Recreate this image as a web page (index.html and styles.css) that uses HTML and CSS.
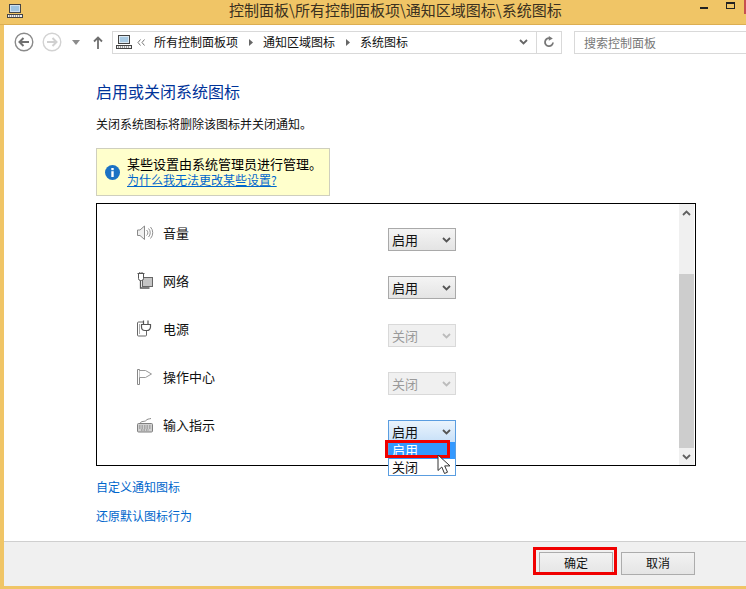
FILE: index.html
```html
<!DOCTYPE html>
<html lang="zh-CN">
<head>
<meta charset="utf-8">
<title>系统图标</title>
<link rel="stylesheet" href="styles.css">
</head>
<body>
<div class="window">
  <header class="titlebar">
    <svg class="win-icon" width="16" height="16" viewBox="0 0 16 16"><rect x="2.5" y="1.5" width="11" height="8" fill="#cfe0ee" stroke="#444"/><rect x="4" y="3" width="8" height="5" fill="#9ec3e0"/><rect x="0.5" y="11.5" width="15" height="3" fill="#eee" stroke="#444"/><path d="M2 13h1M4 13h1M6 13h1M8 13h1M10 13h1M12 13h1" stroke="#444"/></svg>
    <div class="title">控制面板\所有控制面板项\通知区域图标\系统图标</div>
    <div class="controls">
      <span class="min"></span>
      <span class="max"></span>
      <span class="close"></span>
    </div>
  </header>
  <main class="main">
    <nav class="toolbar">
      <svg class="nav-btn" width="20" height="20" viewBox="0 0 20 20"><circle cx="10" cy="10" r="8.8" fill="#fff" stroke="#8a8a8a" stroke-width="1.4"/><path d="M15 10H6M9.5 6L5.5 10l4 4" fill="none" stroke="#707070" stroke-width="2"/></svg>
      <svg class="nav-btn fwd" width="20" height="20" viewBox="0 0 20 20"><circle cx="10" cy="10" r="8.8" fill="#fff" stroke="#d2d2d2" stroke-width="1.4"/><path d="M5 10h9M10.5 6l4 4-4 4" fill="none" stroke="#d0d0d0" stroke-width="2"/></svg>
      <svg class="drop" width="8" height="5" viewBox="0 0 8 5"><path d="M0 0h8L4 5z" fill="#8c8c8c"/></svg>
      <svg class="up" width="10" height="13" viewBox="0 0 10 13"><path d="M5 13V2M1 5.5l4-4 4 4" fill="none" stroke="#6f6f6f" stroke-width="1.8"/></svg>
      <div class="address">
        <svg class="addr-icon" width="16" height="16" viewBox="0 0 16 16"><rect x="2.5" y="1.5" width="11" height="8" fill="#dbe8f2" stroke="#444"/><rect x="4" y="3" width="8" height="5" fill="#a9cbe4"/><rect x="0.5" y="11.5" width="15" height="3" fill="#eee" stroke="#444"/><path d="M2 13h1M4 13h1M6 13h1M8 13h1M10 13h1M12 13h1" stroke="#444"/></svg>
        <svg class="dbl" width="8" height="7" viewBox="0 0 8 7"><path d="M3.5 0.5L1 3.5l2.5 3M7.5 0.5L5 3.5l2.5 3" fill="none" stroke="#777"/></svg>
        <span class="crumb first">所有控制面板项</span>
        <svg class="sep" width="4" height="7" viewBox="0 0 4 7"><path d="M0 0l4 3.5L0 7z" fill="#666"/></svg>
        <span class="crumb">通知区域图标</span>
        <svg class="sep" width="4" height="7" viewBox="0 0 4 7"><path d="M0 0l4 3.5L0 7z" fill="#666"/></svg>
        <span class="crumb">系统图标</span>
        <svg class="addr-chev" width="9" height="6" viewBox="0 0 9 6"><path d="M1 1l3.5 3.5L8 1" fill="none" stroke="#666" stroke-width="1.8"/></svg>
        <div class="refresh">
          <svg width="12" height="12" viewBox="0 0 12 12"><path d="M10 6.5A4 4 0 1 1 6.5 2.2" fill="none" stroke="#777" stroke-width="1.8"/><path d="M5.8 0l4 2.4-4 2.4z" fill="#777"/></svg>
        </div>
      </div>
      <div class="search">搜索控制面板</div>
    </nav>

    <section class="content">
      <h1 class="heading">启用或关闭系统图标</h1>
      <p class="intro">关闭系统图标将删除该图标并关闭通知。</p>
      <div class="notice">
        <svg class="info" width="15" height="15" viewBox="0 0 15 15"><circle cx="7.5" cy="7.5" r="7.5" fill="#1b72c4"/><rect x="6.3" y="3" width="2.4" height="2.2" fill="#fff"/><rect x="6.3" y="6.2" width="2.4" height="5.8" fill="#fff"/></svg>
        <div class="notice-text">
          <div class="notice-main">某些设置由系统管理员进行管理。</div>
          <a class="link notice-link" href="#">为什么我无法更改某些设置?</a>
        </div>
      </div>

      <div class="listbox">
        <div class="rows">
          <div class="row">
            <svg class="row-icon" width="18" height="18" viewBox="0 0 18 18"><path d="M1.500 6h2.500L8.500 2v13.500L4 11.500H1.500z" fill="#f0f0f0" stroke="#8a8a8a"/><path d="M10.500 6a3.500 3.500 0 0 1 0 5.500M12.500 4.500a6 6 0 0 1 0 8.500M14.500 3a8.500 8.500 0 0 1 0 11.500" fill="none" stroke="#909090"/></svg>
            <span class="row-label">音量</span>
            <div class="select"><span>启用</span><svg width="9" height="6" viewBox="0 0 9 6"><path d="M1 1l3.500 3.500L8 1" fill="none" stroke="#555" stroke-width="1.800"/></svg></div>
          </div>
          <div class="row">
            <svg class="row-icon" width="18" height="18" viewBox="0 0 18 18"><rect x="6.500" y="5.500" width="10" height="9" fill="#c4c4c4" stroke="#666"/><path d="M2.500 1.500v5a2 2 0 0 0 2 2h1a2 2 0 0 0 2-2v-5M1.500 1.500h7M3.800 1v-1M6 1v-1" fill="#fff" stroke="#555"/><path d="M4.500 8.500v7.500h9" fill="none" stroke="#555" stroke-width="1.300"/></svg>
            <span class="row-label">网络</span>
            <div class="select"><span>启用</span><svg width="9" height="6" viewBox="0 0 9 6"><path d="M1 1l3.500 3.500L8 1" fill="none" stroke="#555" stroke-width="1.800"/></svg></div>
          </div>
          <div class="row">
            <svg class="row-icon" width="18" height="18" viewBox="0 0 18 18"><path d="M8 2H2.500a1 1 0 0 0-1 1v12a1 1 0 0 0 1 1h7a1 1 0 0 0 1-1v-4" fill="#fff" stroke="#666"/><path d="M3.500 4v10" stroke="#aaa"/><path d="M7.500 0.500v4M12 0.500v4M5.500 4.500h9v2.500a3.500 3.500 0 0 1-3.500 3.500h-2a3.500 3.500 0 0 1-3.500-3.500z" fill="#fff" stroke="#555" stroke-width="1.200"/></svg>
            <span class="row-label">电源</span>
            <div class="select disabled"><span>关闭</span><svg width="9" height="6" viewBox="0 0 9 6"><path d="M1 1l3.500 3.500L8 1" fill="none" stroke="#bcbcbc" stroke-width="1.800"/></svg></div>
          </div>
          <div class="row">
            <svg class="row-icon" width="18" height="18" viewBox="0 0 18 18"><path d="M1.500 1.500h2v15h-2z" fill="#fff" stroke="#888"/><path d="M3.500 2.500h6l6 3.500-6 3.500h-6" fill="#fff" stroke="#999"/></svg>
            <span class="row-label">操作中心</span>
            <div class="select disabled"><span>关闭</span><svg width="9" height="6" viewBox="0 0 9 6"><path d="M1 1l3.500 3.500L8 1" fill="none" stroke="#bcbcbc" stroke-width="1.800"/></svg></div>
          </div>
          <div class="row">
            <svg class="row-icon" width="18" height="18" viewBox="0 0 18 18"><path d="M4 7.500C5 4.500 9 6 10 4.500S13 3 15 2.500" fill="none" stroke="#888"/><rect x="1.500" y="7.500" width="15" height="8.500" rx="1" fill="#d0d0d0" stroke="#7f7f7f"/><path d="M3 10h12M3 12h12M5 14h8" stroke="#7f7f7f" stroke-dasharray="1.500 1"/></svg>
            <span class="row-label">输入指示</span>
            <div class="select open"><span>启用</span><svg width="9" height="6" viewBox="0 0 9 6"><path d="M1 1l3.500 3.500L8 1" fill="none" stroke="#555" stroke-width="1.800"/></svg>
              <ul class="options">
                <li class="option selected">启用</li>
                <li class="option">关闭</li>
              </ul>
              <div class="mark-option"></div>
              <svg class="cursor" width="15" height="21" viewBox="0 0 15 21"><path d="M1 1v15.500l3.800-3.500 2.700 6.500 3-1.300-2.800-6.300H13z" fill="#fff" stroke="#333"/></svg>
            </div>
          </div>
        </div>
        <div class="scrollbar">
          <div class="arrow"><svg width="9" height="6" viewBox="0 0 9 6"><path d="M1 5l3.500-3.500L8 5" fill="none" stroke="#606060" stroke-width="1.800"/></svg></div>
          <div class="track"></div>
          <div class="thumb"></div>
          <div class="arrow"><svg width="9" height="6" viewBox="0 0 9 6"><path d="M1 1l3.500 3.500L8 1" fill="none" stroke="#606060" stroke-width="1.800"/></svg></div>
        </div>
      </div>

      <a class="link extra first-extra" href="#">自定义通知图标</a>
      <a class="link extra second-extra" href="#">还原默认图标行为</a>
    </section>

    <footer class="footer">
      <div class="btn ok">确定<div class="mark-ok"></div></div>
      <div class="btn">取消</div>
    </footer>
  </main>
</div>
</body>
</html>
```

FILE: styles.css
```css
* { box-sizing: border-box; }
html, body { margin: 0; padding: 0; }
body {
  width: 746px;
  height: 589px;
  overflow: hidden;
  font-family: "Noto Sans CJK SC", "Liberation Sans", sans-serif;
  color: #000;
}
svg { display: block; flex: none; }
.window {
  display: flex;
  flex-direction: column;
  width: 746px;
  height: 589px;
  background: #f0c566;
}

/* Title bar */
.titlebar {
  position: relative;
  display: flex;
  height: 25px;
  flex: none;
  border-bottom: 1px solid #dcae52;
}
.win-icon { margin: 3px 0 0 7px; }
.title {
  margin-left: 206px;
  font-size: 15px;
  line-height: 20px;
  color: #3a3020;
  white-space: nowrap;
}
.controls { position: absolute; inset: 0; }
.min { position: absolute; left: 700px; top: 7px; width: 8px; height: 2px; background: #222; }
.max { position: absolute; left: 726px; top: 2px; width: 9px; height: 7px; border: 1px solid #222; border-top-width: 2px; }
.close { position: absolute; left: 744px; top: 0; width: 2px; height: 14px; background: #c75050; }

/* Main */
.main {
  flex: 1;
  display: flex;
  flex-direction: column;
  margin: 0 0 3px 4px;
  background: #fff;
  min-height: 0;
}
.toolbar {
  display: flex;
  align-items: center;
  height: 30px;
  padding-top: 4px;
  flex: none;
}
.nav-btn { margin-left: 10px; }
.fwd { margin-left: 8px; }
.drop { margin-left: 10px; }
.up { margin-left: 13px; }
.address {
  display: flex;
  align-items: center;
  width: 450px;
  height: 23px;
  margin-left: 9px;
  padding-left: 3px;
  border: 1px solid #d9d9d9;
  font-size: 12px;
}
.dbl { margin-left: 5px; }
.crumb { line-height: 18px; white-space: nowrap; color: #111; }
.crumb.first { margin-left: 9px; }
.sep { margin: 0 10px 0 11px; }
.addr-chev { margin-left: auto; margin-right: 8px; }
.refresh {
  display: flex;
  align-items: center;
  justify-content: center;
  width: 25px;
  height: 100%;
  border-left: 1px solid #d9d9d9;
}
.search {
  flex: 1;
  height: 23px;
  margin-left: 12px;
  padding-left: 9px;
  border: 1px solid #d9d9d9;
  border-right: 0;
  font-size: 12px;
  line-height: 21px;
  color: #777;
}

/* Content */
.content {
  flex: 1;
  display: flex;
  flex-direction: column;
  align-items: flex-start;
  padding: 24px 0 0 92px;
  min-height: 0;
}
.heading {
  margin: 0;
  font-size: 16px;
  font-weight: 400;
  line-height: 24px;
  color: #003399;
}
.intro {
  margin: 12px 0 0;
  font-size: 12px;
  line-height: 18px;
  color: #111;
}
.notice {
  display: flex;
  align-items: center;
  width: 234px;
  height: 48px;
  margin-top: 15px;
  padding-left: 8px;
  background: #ffffcc;
  border: 1px solid #cfcfbe;
}
.info { margin-right: 7px; }
.notice-text { padding-bottom: 3px; }
.notice-main { font-size: 13px; line-height: 17px; }
.link { color: #0066cc; text-decoration: none; }
.notice-link { display: block; font-size: 12px; line-height: 15px; text-decoration: underline; }

/* List */
.listbox {
  display: flex;
  width: 600px;
  height: 263px;
  margin-top: 7px;
  border: 1px solid #000;
}
.rows {
  flex: 1;
  display: flex;
  flex-direction: column;
  padding-top: 24px;
}
.row {
  display: flex;
  align-items: flex-start;
  height: 48px;
  flex: none;
  padding-left: 39px;
}
.row-icon { margin-top: -4px; }
.row-label {
  width: 225px;
  margin: -5px 0 0 9px;
  font-size: 13px;
  line-height: 20px;
  color: #111;
}
.select {
  position: relative;
  display: flex;
  align-items: center;
  justify-content: space-between;
  width: 68px;
  height: 23px;
  padding: 0 4px 0 3px;
  border: 1px solid #a9a9a9;
  background: linear-gradient(#f4f4f4, #e4e4e4);
  font-size: 13px;
  line-height: 20px;
  color: #111;
}
.select.disabled {
  border-color: #d9d9d9;
  background: #f0f0f0;
  color: #9a9a9a;
}
.select.open {
  border-color: #5a9de0;
  background: linear-gradient(#eaf4fd, #c8e0f8);
}
.options {
  position: absolute;
  left: -1px;
  top: 21px;
  width: 68px;
  margin: 0;
  padding: 0;
  list-style: none;
  background: #fff;
  border: 1px solid #5a9de0;
  border-top: 0;
  z-index: 2;
}
.option { height: 16px; padding-left: 3px; font-size: 13px; line-height: 16px; }
.option.selected { height: 17px; background: #3399ff; color: #fff; }
.mark-option {
  position: absolute;
  left: -4px;
  top: 19px;
  width: 65px;
  height: 18px;
  border: 3px solid #f00000;
  z-index: 3;
}
.cursor { position: absolute; left: 48px; top: 33px; z-index: 4; }

.scrollbar {
  display: flex;
  flex-direction: column;
  width: 15px;
  margin-right: 1px;
  background: #f0f0f0;
}
.arrow { display: flex; align-items: center; justify-content: center; height: 17px; flex: none; }
.track { height: 53px; flex: none; }
.thumb { flex: 1; background: #cdcdcd; }

.extra { font-size: 12px; line-height: 18px; }
.first-extra { margin-top: 12px; }
.second-extra { margin-top: 11px; }

/* Footer */
.footer {
  display: flex;
  justify-content: flex-end;
  gap: 8px;
  height: 45px;
  flex: none;
  padding: 10px 51px 0 0;
  background: #f0f0f0;
  border-top: 1px solid #cfcfcf;
}
.btn {
  position: relative;
  width: 74px;
  height: 23px;
  border: 1px solid #acacac;
  background: linear-gradient(#f2f2f2, #e5e5e5);
  font-size: 12px;
  line-height: 20px;
  text-align: center;
  color: #111;
}
.mark-ok {
  position: absolute;
  left: -7px;
  top: -6px;
  width: 84px;
  height: 28px;
  border: 3px solid #f00000;
}
```
